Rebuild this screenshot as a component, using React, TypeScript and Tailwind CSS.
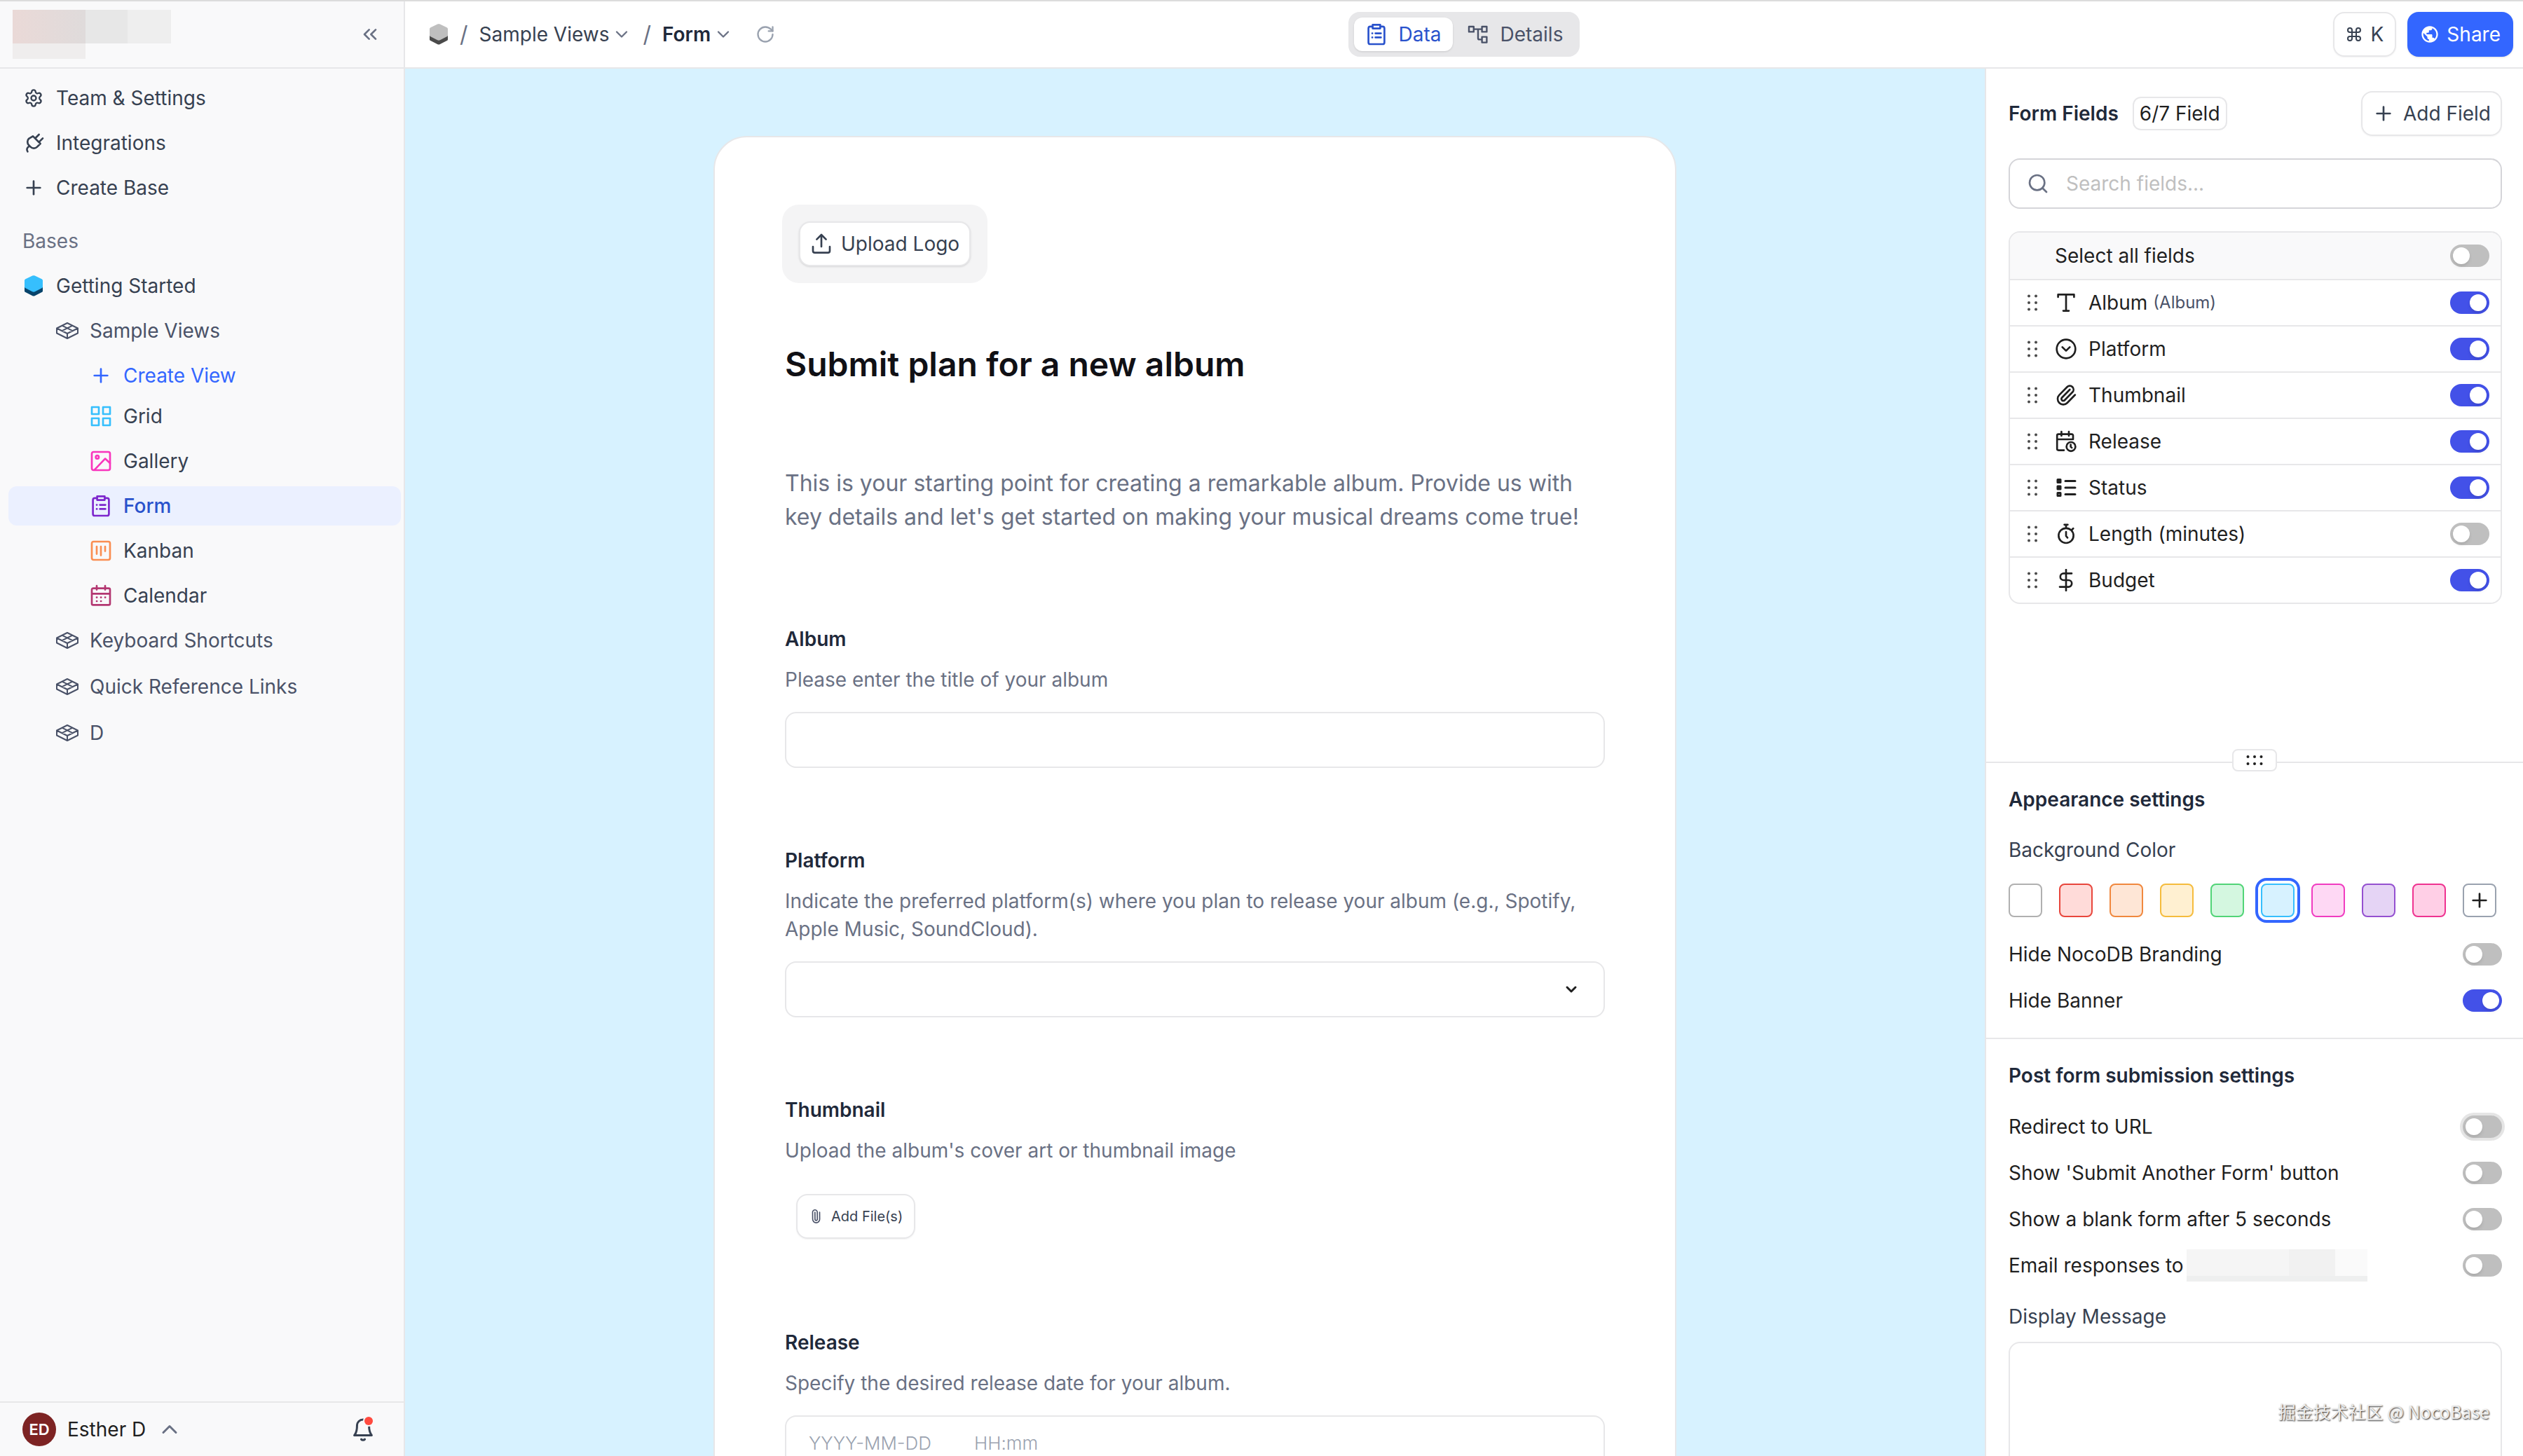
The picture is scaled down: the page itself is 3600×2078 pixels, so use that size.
import { useState } from 'react'
import type { ReactNode } from 'react'
import { ChevronDown, ChevronUp, ChevronsLeft, CircleChevronDown, Command, Paperclip, Plus, RotateCw, Search, Settings } from 'lucide-react'

type IconProps = { className?: string }

// Stroke icons share one 16px grid
function Icon({ className, children, width = 1.33 }: IconProps & { children: ReactNode; width?: number }) {
  return (
    <svg viewBox="0 0 16 16" fill="none" stroke="currentColor" strokeWidth={width} strokeLinecap="round" strokeLinejoin="round" aria-hidden="true" className={className}>
      {children}
    </svg>
  )
}

function CubeIcon({ className, top, side }: IconProps & { top: string; side: string }) {
  return (
    <svg viewBox="0 0 28 30" aria-hidden="true" className={className}>
      <path d="M1 15h26v7c0 1-.4 1.600-1.300 2.100l-9.700 4.900c-1.300.7-2.700.7-4 0l-9.700-4.900C1.400 23.600 1 23 1 22z" fill={side} />
      <path d="M12.200.6c1.200-.6 2.400-.6 3.600 0l9.800 4.600c.9.500 1.400 1.200 1.400 2.200v9.200c0 .7-.3 1.100-1 1.500l-10.200 5.200c-1.200.6-2.400.6-3.600 0L2 18.100c-.7-.4-1-.8-1-1.500V7.400c0-1 .5-1.700 1.400-2.200z" fill={top} />
    </svg>
  )
}

const TableIcon = ({ className }: IconProps) => (
  <svg viewBox="0 0 32 26" fill="none" stroke="currentColor" strokeWidth="2" strokeLinejoin="round" aria-hidden="true" className={className}>
    <path d="M16 2 31 9.500 16 17 1 9.500zM1 9.500v7L16 24l15-7.500v-7M16 17v7M8.500 5.700l15 7.500M23.500 5.700l-15 7.500" />
  </svg>
)

const PlugIcon = ({ className }: IconProps) => (
  <Icon className={className}>
    <path d="M7.500 3.200 12.800 8.500l-2.300 2.300a3.300 3.300 0 0 1-4.700 0L4.600 9.600a3.300 3.300 0 0 1 0-4.700zM9.300 4.500 11.800 2M12 7.200l2.500-2.500M5.200 10.200c-1.800.9-2.600 2.300-1.500 4" />
  </Icon>
)

const GridIcon = ({ className }: IconProps) => (
  <Icon className={className}>
    <path d="M1.500 1.500h5v5h-5zM9.500 1.500h5v5h-5zM1.500 9.500h5v5h-5zM9.500 9.500h5v5h-5z" />
  </Icon>
)

const GalleryIcon = ({ className }: IconProps) => (
  <Icon className={className}>
    <rect x="1.500" y="1.500" width="13" height="13" rx="1.200" />
    <circle cx="5.400" cy="5.200" r="1.100" />
    <path d="m14.500 9.500-3.500-3.200L3.500 14.200" />
  </Icon>
)

const FormIcon = ({ className }: IconProps) => (
  <Icon className={className}>
    <path d="M5.300 2.400H3.600c-.8 0-1.300.5-1.300 1.300v10c0 .8.500 1.300 1.300 1.300h8.800c.8 0 1.300-.5 1.300-1.300v-10c0-.8-.5-1.300-1.300-1.300h-1.700M5.300 1.200h5.400v2.600H5.300zM5 7.300h.1M7.300 7.300h3.900M5 10.200h.1M7.300 10.200h3.900" />
  </Icon>
)

const KanbanIcon = ({ className }: IconProps) => (
  <Icon className={className}>
    <rect x="1.500" y="1.500" width="13" height="13" rx="1.200" />
    <path d="M5 5v5.300M8 5v6.300M11 5v3.300" />
  </Icon>
)

const CalendarIcon = ({ className }: IconProps) => (
  <Icon className={className}>
    <path d="M2.500 2.800h11c.6 0 1 .4 1 1v9.900c0 .6-.4 1-1 1h-11c-.6 0-1-.4-1-1V3.800c0-.6.4-1 1-1zM5 1v2.800M11 1v2.800M1.500 6.700h13M5 9.300h.1M8 9.300h.1M11 9.300h.1M5 12h.1M8 12h.1" />
  </Icon>
)

const FlowIcon = ({ className }: IconProps) => (
  <Icon className={className} width={1.2}>
    <path d="M1.500 2.500h3.400v3.700H1.500zM10.800 2.500h3.400v3.700h-3.400zM10.800 9.800h3.400v4h-3.400zM4.900 4.300h5.900M8 4.300v6.400c0 .7.300 1 1 1h1.800" />
  </Icon>
)

const UploadIcon = ({ className }: IconProps) => (
  <Icon className={className}>
    <path d="M2 10v3c0 .8.500 1.300 1.300 1.300h9.400c.8 0 1.300-.5 1.300-1.300v-3M8 10V1.500M4.700 4.800 8 1.500l3.300 3.300" />
  </Icon>
)

const GlobeIcon = ({ className }: IconProps) => (
  <svg viewBox="0 0 24 24" fill="currentColor" aria-hidden="true" className={className}>
    <path d="M12 2C6.480 2 2 6.480 2 12s4.480 10 10 10 10-4.480 10-10S17.520 2 12 2zm-1 17.930c-3.950-.49-7-3.850-7-7.930 0-.62.080-1.210.210-1.790L9 15v1c0 1.100.9 2 2 2v1.930zm6.900-2.540c-.26-.81-1-1.390-1.900-1.390h-1v-3c0-.55-.45-1-1-1H8v-2h2c.55 0 1-.45 1-1V7h2c1.100 0 2-.9 2-2v-.41c2.930 1.190 5 4.060 5 7.410 0 2.080-.8 3.970-2.100 5.390z" />
  </svg>
)

const BellIcon = ({ className }: IconProps) => (
  <Icon className={className}>
    <path d="M8 1.800a3.800 3.800 0 0 0-3.800 3.800c0 3.600-.6 4.900-1.700 6.200h11c-1.100-1.300-1.700-2.600-1.700-6.200A3.800 3.800 0 0 0 8 1.800zM6.900 14.300c.5.600 1.700.6 2.200 0" />
  </Icon>
)

const DragIcon = ({ className }: IconProps) => (
  <svg viewBox="0 0 16 24" fill="currentColor" aria-hidden="true" className={className}>
    {[2.5, 12, 21.5].map(y => (
      <g key={y}>
        <circle cx="3" cy={y} r="2" />
        <circle cx="13" cy={y} r="2" />
      </g>
    ))}
  </svg>
)

const TextIcon = ({ className }: IconProps) => (
  <Icon className={className}>
    <path d="M2.300 4V2.200h11.400V4M8 2.200v11.600M6 13.800h4" />
  </Icon>
)

const DateTimeIcon = ({ className }: IconProps) => (
  <Icon className={className}>
    <path d="M13 6.500V3.800c0-.6-.4-1-1-1H2.600c-.6 0-1 .4-1 1v9.500c0 .6.4 1 1 1H6.500M4.700 1v3M10 1v3M1.600 6.500H13" />
    <circle cx="11.500" cy="11.700" r="3.200" />
    <path d="M11.300 10.300v1.600l.8.600" />
  </Icon>
)

const StatusIcon = ({ className }: IconProps) => (
  <Icon className={className} width={1.5}>
    <path d="M7.500 3.200H14.500M7.500 8H14.500M7.500 12.800H14.500" />
    <path d="M2 2.200h2v2H2zM2 7h2v2H2z" fill="currentColor" />
    <path d="M2 11.800h2v2H2z" />
  </Icon>
)

const TimerIcon = ({ className }: IconProps) => (
  <Icon className={className}>
    <circle cx="8" cy="9.200" r="5.300" />
    <path d="M6.800 1.400h2.400M8 1.400v2.300M12.200 5l.9-.9M8 6.500v3l1 1.200" />
  </Icon>
)

const DollarIcon = ({ className }: IconProps) => (
  <Icon className={className}>
    <path d="M8 .5v15M12 3.200H6.300a2.400 2.400 0 0 0 0 4.800h3.400a2.400 2.400 0 0 1 0 4.800H3.500" />
  </Icon>
)

const views = [
  { name: 'Grid', icon: GridIcon, color: 'text-[#36bffd]' },
  { name: 'Gallery', icon: GalleryIcon, color: 'text-[#f936bd]' },
  { name: 'Form', icon: FormIcon, color: 'text-[#7d26cd]' },
  { name: 'Kanban', icon: KanbanIcon, color: 'text-[#fa8e52]' },
  { name: 'Calendar', icon: CalendarIcon, color: 'text-[#b33771]' },
]

const tables = ['Keyboard Shortcuts', 'Quick Reference Links', 'D']

const fields = [
  { name: 'Album', alias: '(Album)', icon: TextIcon, on: true },
  { name: 'Platform', icon: CircleChevronDown, on: true },
  { name: 'Thumbnail', icon: Paperclip, on: true },
  { name: 'Release', icon: DateTimeIcon, on: true },
  { name: 'Status', icon: StatusIcon, on: true },
  { name: 'Length (minutes)', icon: TimerIcon, on: false },
  { name: 'Budget', icon: DollarIcon, on: true },
]

const swatches = [
  { name: 'White', style: 'border-[#b0b0b0] bg-white' },
  { name: 'Red', style: 'border-[#e8463c] bg-[#ffdbd9]' },
  { name: 'Orange', style: 'border-[#f0883e] bg-[#fee6d6]' },
  { name: 'Yellow', style: 'border-[#f5bc3d] bg-[#fff0d1]' },
  { name: 'Green', style: 'border-[#51d477] bg-[#d4f7e0]' },
  { name: 'Blue', style: 'border-[#36bffd] bg-[#d7f2ff]' },
  { name: 'Pink', style: 'border-[#f03cc0] bg-[#fed8f4]' },
  { name: 'Purple', style: 'border-[#9450d0] bg-[#e5d4f5]' },
  { name: 'Maroon', style: 'border-[#ee3390] bg-[#ffcfe6]' },
]

function Switch({ label, initial = false, focused = false }: { label: string; initial?: boolean; focused?: boolean }) {
  const [on, setOn] = useState(initial)
  return (
    <input
      type="checkbox"
      role="switch"
      aria-label={label}
      checked={on}
      onChange={e => setOn(e.target.checked)}
      className={`flex h-8 w-14 shrink-0 cursor-pointer appearance-none items-center rounded-full bg-[#bfbfbf] px-1 before:h-6 before:w-6 before:rounded-full before:bg-white before:shadow-md checked:justify-end checked:bg-[#4351e8] ${focused ? 'ring-4 ring-[#e5e5e5]' : ''}`}
    />
  )
}

function Sidebar() {
  return (
    <aside className="flex w-[578px] shrink-0 flex-col border-r-2 border-[#e7e7e9] bg-[#f9f9fa] text-[#374151]">
      <div className="flex h-24 shrink-0 items-center justify-between border-b-2 border-[#e7e7e9] pr-8 pl-[18px]">
        {/* redacted workspace name */}
        <div className="grid h-[70px] w-[226px] grid-cols-[104px_60px_62px] grid-rows-[48px_22px]">
          <div className="bg-linear-to-r from-[#ead9d7] to-[#dfdbdb]" />
          <div className="bg-[#e7e7e7]" />
          <div className="bg-[#eeeeee]" />
          <div className="bg-[#efeded]" />
        </div>
        <button aria-label="Collapse sidebar" className="text-[#6a7184]">
          <ChevronsLeft className="size-8" strokeWidth={2} />
        </button>
      </div>

      <nav className="flex flex-1 flex-col pt-[14px] pr-1 pl-3">
        <div className="flex flex-col gap-2">
          <a href="#settings" className="flex h-14 items-center gap-4 pl-5">
            <Settings className="size-8 p-0.5" strokeWidth={2} />Team &amp; Settings
          </a>
          <a href="#integrations" className="flex h-14 items-center gap-4 pl-5">
            <PlugIcon className="size-8" />Integrations
          </a>
          <a href="#create-base" className="flex h-14 items-center gap-4 pl-5">
            <Plus className="size-8" strokeWidth={2} />Create Base
          </a>
        </div>
        <h2 className="mt-5 flex h-14 items-center pl-5 text-[#6a7184]">Bases</h2>
        <a href="#base" className="mt-2 flex h-14 items-center gap-4 pl-5">
          <CubeIcon className="h-[30px] w-8" top="#36bffd" side="#08446b" />
          Getting Started
        </a>
        <a href="#sample-views" className="mt-2 flex h-14 items-center gap-4 pl-[68px] text-[#4a5268]">
          <TableIcon className="h-[26px] w-8" />Sample Views
        </a>
        <button className="mt-2 flex h-14 items-center gap-4 pl-[116px] text-[#3366ff]">
          <Plus className="size-8" strokeWidth={2} />Create View
        </button>
        <div className="mt-0.5 flex flex-col gap-2">
          {views.map(({ name, icon: ViewIcon, color }) => (
            <a
              key={name}
              href={`#${name.toLowerCase()}`}
              className={`flex h-14 items-center gap-4 rounded-xl pl-[116px] ${name === 'Form' ? 'bg-[#ebf0ff] font-medium text-[#2952cc]' : ''}`}
            >
              <ViewIcon className={`size-8 ${color}`} />{name}
            </a>
          ))}
        </div>
        <div className="mt-2 flex flex-col gap-2.5">
          {tables.map(name => (
            <a key={name} href="#table" className="flex h-14 items-center gap-4 pl-[68px] text-[#4a5268]">
              <TableIcon className="h-[26px] w-8" />{name}
            </a>
          ))}
        </div>
      </nav>

      <div className="flex h-[78px] items-center justify-between border-t-2 border-[#e7e7e9] pr-10 pl-8">
        <button className="flex items-center gap-4 text-[#1f1f1f]">
          <span className="flex size-12 items-center justify-center rounded-full bg-[#7d2323] text-[22px] font-semibold text-white">ED</span>
          Esther D
          <ChevronUp className="size-9 text-[#6a7184]" strokeWidth={2} />
        </button>
        <button aria-label="Notifications" className="relative">
          <BellIcon className="size-9" />
          <span className="absolute top-0 right-1 size-3 rounded-full bg-[#ff4a3f] ring-2 ring-[#f9f9fa]" />
        </button>
      </div>
    </aside>
  )
}

function Topbar() {
  return (
    <header className="flex h-24 shrink-0 items-center border-b-2 border-[#e7e7e9] px-[14px] text-[#374151]">
      <div className="flex flex-1 items-center gap-4">
        <CubeIcon className="ml-5 h-[30px] w-7" top="#bfbfbf" side="#4a4a4a" />
        <span className="text-[32px] text-[#6a7184]">/</span>
        <button className="flex items-center gap-1">
          Sample Views<ChevronDown className="size-7 text-[#6a7184]" strokeWidth={2} />
        </button>
        <span className="text-[32px] text-[#6a7184]">/</span>
        <button className="flex items-center gap-1 font-semibold text-[#1f293a]">
          Form<ChevronDown className="size-7 text-[#6a7184]" strokeWidth={2} />
        </button>
        <button aria-label="Reload" className="ml-4 text-[#9aa2af]">
          <RotateCw className="size-7" strokeWidth={2} />
        </button>
      </div>

      <div className="flex h-16 items-center gap-1 rounded-2xl bg-[#e7e7e9] p-2">
        <button className="flex h-12 items-center gap-4 rounded-xl bg-white px-4 text-[#2952cc] shadow-sm">
          <FormIcon className="size-8" />Data
        </button>
        <button className="flex h-12 items-center gap-4 px-4 text-[#4a5268]">
          <FlowIcon className="size-8" />Details
        </button>
      </div>

      <div className="flex flex-1 items-center justify-end gap-4">
        <button className="flex h-16 items-center gap-3 rounded-2xl border-2 border-[#e7e7e9] px-4 shadow-xs">
          <Command className="size-6" strokeWidth={2} />K
        </button>
        <button className="flex h-16 items-center gap-2.5 rounded-2xl bg-[#3366ff] px-[18px] text-white shadow-sm">
          <GlobeIcon className="size-7" />Share
        </button>
      </div>
    </header>
  )
}

function FormField({ id, label, hint, children }: { id: string; label: string; hint: string; children: ReactNode }) {
  return (
    <div className="flex flex-col">
      <label htmlFor={id} className="leading-10 font-semibold text-[#1f293a]">{label}</label>
      <p className="mt-[18px] mb-[26px] leading-10 text-[#6a7184]">{hint}</p>
      {children}
    </div>
  )
}

function FormCanvas() {
  return (
    <main className="flex flex-1 justify-center overflow-hidden bg-[#d7f2ff] px-12 pt-24">
      <div className="w-full max-w-[1374px] shrink-0 self-start rounded-[48px] border-2 border-[#e7e7e9] bg-white px-24 py-24">
        <div className="inline-flex rounded-3xl bg-[#f4f4f5] p-6">
          <button className="flex h-16 items-center gap-3 rounded-2xl border-2 border-[#e7e7e9] bg-white px-[14px] text-[#374151] shadow-sm">
            <UploadIcon className="size-8" />Upload Logo
          </button>
        </div>
        <div className="px-1">
          <h1 className="mt-[84px] text-[48px] leading-[64px] font-semibold text-[#101015]">Submit plan for a new album</h1>
          <p className="mt-[114px] text-[32px] leading-[48px] text-[#6a7184]">
            This is your starting point for creating a remarkable album. Provide us with key details and let's get started on making your musical dreams come true!
          </p>

          <form className="mt-[130px] flex flex-col gap-28">
            <FormField id="album" label="Album" hint="Please enter the title of your album">
              <input id="album" type="text" className="h-20 rounded-2xl border-2 border-[#e7e7e9] px-8" />
            </FormField>
            <FormField id="platform" label="Platform" hint="Indicate the preferred platform(s) where you plan to release your album (e.g., Spotify, Apple Music, SoundCloud).">
              <div className="relative flex">
                <select id="platform" className="h-20 w-full appearance-none rounded-2xl border-2 border-[#e7e7e9] px-8">
                  <option value=""></option>
                </select>
                <ChevronDown className="pointer-events-none absolute top-7 right-9 size-6 text-[#1f1f1f]" strokeWidth={3} />
              </div>
            </FormField>
            <FormField id="thumbnail" label="Thumbnail" hint="Upload the album's cover art or thumbnail image">
              <div className="px-4 py-4">
                <button id="thumbnail" type="button" className="flex h-16 items-center gap-3 rounded-2xl border-2 border-[#e7e7e9] px-4 text-[20px] text-[#374151] shadow-xs">
                  <Paperclip className="size-5 -rotate-45 text-[#4a5268]" strokeWidth={2} />Add File(s)
                </button>
              </div>
            </FormField>
            <FormField id="release" label="Release" hint="Specify the desired release date for your album.">
              <div className="flex h-20 items-center gap-8 rounded-2xl border-2 border-[#e7e7e9] px-8 text-[26px] font-light">
                <input id="release" type="text" placeholder="YYYY-MM-DD" className="w-[204px] placeholder:text-[#9aa2af]" />
                <input type="text" aria-label="Release time" placeholder="HH:mm" className="w-[204px] placeholder:text-[#9aa2af]" />
              </div>
            </FormField>
          </form>
        </div>
      </div>
    </main>
  )
}

function SettingRow({ label, on, focused, children }: { label: string; on?: boolean; focused?: boolean; children?: ReactNode }) {
  return (
    <div className="flex h-[66px] items-center justify-between">
      <span className="flex items-center gap-1">{label}{children}</span>
      <Switch label={label} initial={on} focused={focused} />
    </div>
  )
}

function SettingsPanel() {
  const [color, setColor] = useState('Blue')
  return (
    <aside className="flex w-[768px] shrink-0 flex-col border-l-2 border-[#e7e7e9] text-[#1f1f1f]">
      <section className="min-h-0 flex-1 basis-0 overflow-hidden">
        <div className="pt-8 pr-[30px] pl-8">
          <div className="flex items-center justify-between">
            <div className="flex items-center gap-5">
              <h2 className="font-semibold text-[#1f293a]">Form Fields</h2>
              <span className="rounded-xl border-2 border-[#e7e7e9] px-2 leading-[44px]">6/7 Field</span>
            </div>
            <button className="flex h-16 items-center gap-3 rounded-2xl border-2 border-[#e7e7e9] px-[14px] text-[#374151] shadow-xs">
              <Plus className="size-8" strokeWidth={2} />Add Field
            </button>
          </div>

          <label className="mt-8 flex h-[72px] items-center gap-6 rounded-2xl border-2 border-[#d5d5d9] px-6">
            <Search className="size-8 text-[#6a7184]" strokeWidth={2} />
            <input type="search" aria-label="Search fields" placeholder="Search fields..." className="flex-1 placeholder:text-[#bfbfbf]" />
          </label>

          <ul className="mt-8 divide-y-2 divide-[#e7e7e9] overflow-hidden rounded-2xl border-2 border-[#e7e7e9]">
            <li className="flex h-[68px] items-center justify-between bg-[#f9f9fa] pr-4 pl-16">
              Select all fields
              <Switch label="Select all fields" />
            </li>
            {fields.map(({ name, alias, icon: FieldIcon, on }) => (
              <li key={name} className="flex h-[66px] items-center pr-4 pl-6 last:h-16">
                <DragIcon className="h-6 w-4 text-[#4a4a4a]" />
                <FieldIcon className="mr-4 ml-6 size-8" strokeWidth={2} />
                {name}
                {alias && <span className="ml-2 text-[24px] text-[#4a5268]">{alias}</span>}
                <span className="ml-auto"><Switch label={name} initial={on} /></span>
              </li>
            ))}
          </ul>
        </div>
      </section>

      <section className="relative min-h-0 flex-1 basis-0 border-t-2 border-[#e7e7e9]">
        <button aria-label="Resize panels" className="absolute -top-5 left-1/2 flex h-8 w-16 -translate-x-1/2 items-center justify-center rounded-lg border-2 border-[#e7e7e9] bg-white">
          <DragIcon className="h-6 w-4 rotate-90" />
        </button>
        <div className="pt-8 pr-[30px] pb-5 pl-8">
          <h2 className="leading-10 font-semibold text-[#1f293a]">Appearance settings</h2>
          <p className="mt-8 leading-10 text-[#374151]">Background Color</p>
          <div className="mt-7 mb-5 flex gap-6">
            {swatches.map(({ name, style }) => (
              <button
                key={name}
                aria-label={name}
                onClick={() => setColor(name)}
                className={`size-12 rounded-lg border-2 ${style} ${color === name ? 'outline-4 outline-offset-4 outline-[#3366ff]' : ''}`}
              />
            ))}
            <button aria-label="Custom color" className="flex size-12 items-center justify-center rounded-lg border-2 border-[#9aa2af]">
              <Plus className="size-8" strokeWidth={2} />
            </button>
          </div>
          <SettingRow label="Hide NocoDB Branding" />
          <SettingRow label="Hide Banner" on />
        </div>
        <div className="border-t-2 border-[#e7e7e9] pt-8 pr-[30px] pl-8">
          <h2 className="mb-5 leading-10 font-semibold text-[#1f293a]">Post form submission settings</h2>
          <SettingRow label="Redirect to URL" focused />
          <SettingRow label="Show 'Submit Another Form' button" />
          <SettingRow label="Show a blank form after 5 seconds" />
          <SettingRow label="Email responses to">
            {/* redacted address */}
            <span className="flex h-[46px] w-[258px] border-b-8 border-[#eeefef]">
              <span className="w-[146px] bg-[#f5f5f5]" />
              <span className="w-[66px] bg-[#f1f1f1]" />
              <span className="flex-1 bg-[#fafafa]" />
            </span>
          </SettingRow>
          <label htmlFor="message" className="mt-5 block leading-10 text-[#374151]">Display Message</label>
          <textarea id="message" className="mt-4 block h-60 w-full resize-none rounded-2xl border-2 border-[#e7e7e9] p-4" />
        </div>
      </section>
    </aside>
  )
}

export default function App() {
  return (
    <div className="relative flex h-screen overflow-hidden border-t-2 border-[#dcdcdc] bg-white font-['Inter','Noto_Sans_CJK_SC',sans-serif] text-[28px] leading-10">
      <Sidebar />
      <div className="flex min-w-0 flex-1 flex-col">
        <Topbar />
        <div className="flex min-h-0 flex-1">
          <FormCanvas />
          <SettingsPanel />
        </div>
      </div>
      <span className="absolute right-12 bottom-11 font-['Noto_Sans_CJK_SC',sans-serif] text-[25px] text-[#ececec] [text-shadow:1px_1px_2px_#222]">掘金技术社区 @ NocoBase</span>
    </div>
  )
}
